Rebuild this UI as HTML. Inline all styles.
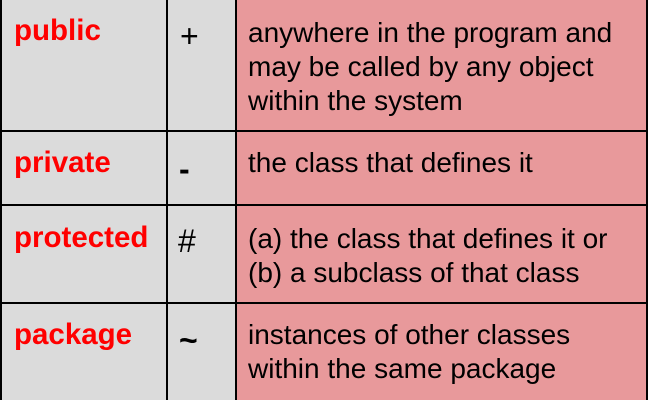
<html><head><style>
body{margin:0;width:650px;height:400px;overflow:hidden;background:#fff;font-family:"Liberation Sans",sans-serif}
.c{position:absolute;box-sizing:border-box}
.g{background:#dbdbdb}.p{background:#e8999b}
.b{position:absolute;background:#000}
.t{position:absolute;font-size:28px;line-height:34px;color:#000;white-space:nowrap}
.r{color:#f00;font-weight:bold;font-size:29.5px}
.s{font-size:32px}
</style></head><body>
<div class="c g" style="left:0;top:0;width:236px;height:400px"></div>
<div class="c p" style="left:236px;top:0;width:412px;height:400px"></div>
<div class="b" style="left:0;top:0;width:2px;height:400px"></div>
<div class="b" style="left:166px;top:0;width:2px;height:400px"></div>
<div class="b" style="left:235px;top:0;width:2px;height:400px"></div>
<div class="b" style="left:646px;top:0;width:2px;height:400px"></div>
<div class="b" style="left:0;top:130px;width:648px;height:2px"></div>
<div class="b" style="left:0;top:204px;width:648px;height:2px"></div>
<div class="b" style="left:0;top:302px;width:648px;height:2px"></div>
<div class="t r" style="left:14px;top:14px">public</div>
<div class="t s" style="left:180px;top:19px">+</div>
<div class="t" style="left:248px;top:16px">anywhere in the program and<br>may be called by any object<br>within the system</div>
<div class="t r" style="left:14px;top:146px">private</div>
<div class="t s" style="left:179px;top:152px;font-weight:bold">-</div>
<div class="t" style="left:248px;top:146px">the class that defines it</div>
<div class="t r" style="left:14px;top:221px">protected</div>
<div class="t s" style="left:178px;top:224px">#</div>
<div class="t" style="left:248px;top:222px">(a) the class that defines it or<br>(b) a subclass of that class</div>
<div class="t r" style="left:14px;top:318px">package</div>
<div class="t s" style="left:179px;top:323px;font-weight:bold">~</div>
<div class="t" style="left:248px;top:318px">instances of other classes<br>within the same package</div>
</body></html>
